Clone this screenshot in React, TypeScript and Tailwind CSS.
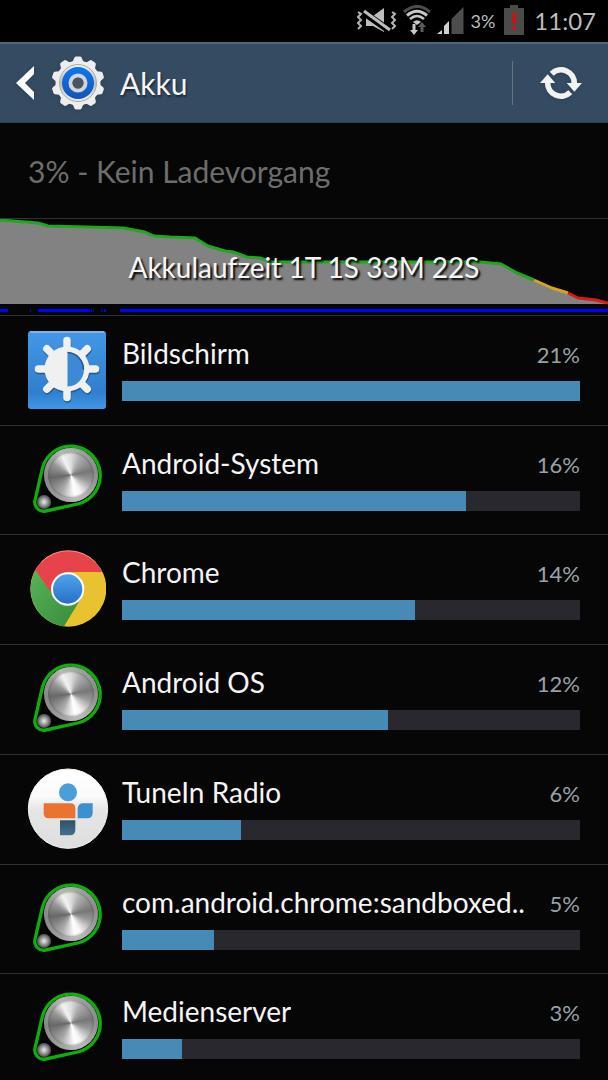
import type { ReactNode } from "react";

const TEETH = [0, 36, 72, 108, 144, 180, 216, 252, 288, 324];
const RAYS = [0, 45, 90, 135, 180, 225, 270, 315];

function MuteIcon() {
  return (
    <svg className="h-8 w-10" viewBox="0 0 40 32" fill="none" aria-hidden="true">
      <path d="M9 11h7L27 3v24l-11-6H9z" fill="#bdbdbd" />
      <path d="M6 7l27 19" stroke="#000" strokeWidth="7" />
      <path d="M7 6l26 19" stroke="#bdbdbd" strokeWidth="3" />
      <path
        d="M1 7l3 2-3 3 3 3-3 3 3 3-3 3M35 7l3 2-3 3 3 3-3 3 3 3-3 3"
        stroke="#b4b4b4"
        strokeWidth="2"
      />
    </svg>
  );
}

function WifiIcon() {
  return (
    <svg className="h-8 w-7" viewBox="0 0 28 32" fill="none" aria-hidden="true">
      <path d="M1 7Q14-4 27 7" stroke="#4d4d4d" strokeWidth="3" />
      <path d="M4 10.500Q14 2 24 10.500" stroke="#c8c8c8" strokeWidth="3" />
      <path d="M7 14Q14 8 21 14" stroke="#c8c8c8" strokeWidth="2.600" />
      <path d="M10 17Q14 13.500 18 17L14 20z" fill="#c8c8c8" />
      <path d="M9.500 19h3v6H15l-4 5-4-5h2.500z" fill="#c8c8c8" />
      <path d="M17.500 27h3v-5H23l-4-5-4 5h2.500z" fill="#5c5c5c" />
    </svg>
  );
}

function SignalIcon() {
  return (
    <svg className="h-8 w-[27px]" viewBox="0 0 27 32" aria-hidden="true">
      <path d="M0 29l5-4v4z" fill="#d0d0d0" />
      <path d="M7 29v-8l5-5v13z" fill="#d0d0d0" />
      <path d="M14.500 29V14L26.500 2v27z" fill="#4d4d4d" />
    </svg>
  );
}

function BatteryIcon() {
  return (
    <svg className="h-8 w-5" viewBox="0 0 20 32" aria-hidden="true">
      <path d="M6 0h8v3h6v27H0V3h6z" fill="#4b4b49" />
      <path d="M8.500 8h3.500v11H8.500zM8.500 21.500h3.500v3H8.500z" fill="#d40f0f" />
    </svg>
  );
}

function SettingsGear() {
  return (
    <svg className="size-14 drop-shadow-sm" viewBox="-28 -28 56 56" aria-hidden="true">
      <defs>
        <linearGradient id="gear" x1="0" y1="0" x2="0" y2="1">
          <stop offset="0" stopColor="#f4f4f4" />
          <stop offset="0.5" stopColor="#bdbdbd" />
          <stop offset="1" stopColor="#f0f0f0" />
        </linearGradient>
        <linearGradient id="gearBlue" x1="0" y1="0" x2="0" y2="1">
          <stop offset="0" stopColor="#0a78f5" />
          <stop offset="1" stopColor="#1454b4" />
        </linearGradient>
      </defs>
      {TEETH.map((a) => (
        <path key={a} d="M-6-20l2.500-5.500q.5-1 1.500-1h4q1 0 1.500 1L6-20z" fill="#ededed" transform={`rotate(${a})`} />
      ))}
      <circle r="22.500" fill="#ededed" />
      <circle r="18.500" fill="url(#gear)" stroke="#a9a9a9" strokeWidth="1" />
      <circle r="16" fill="url(#gearBlue)" />
      <circle r="7.500" fill="none" stroke="#d4d4d4" strokeWidth="4" />
      <circle r="5.500" fill="#4a5560" />
    </svg>
  );
}

function RefreshIcon() {
  return (
    <svg className="h-9 w-11 drop-shadow-sm" viewBox="-66 -54 132 108" fill="none" aria-hidden="true">
      <path d="M-28-28A40 40 0 0 1 40 2" stroke="#f2f2f2" strokeWidth="17" />
      <path d="M17 0H63L40 26z" fill="#f2f2f2" />
      <path d="M28 28A40 40 0 0 1-40-2" stroke="#f2f2f2" strokeWidth="17" />
      <path d="M-17 0H-63L-40-26z" fill="#f2f2f2" />
    </svg>
  );
}

function DisplayIcon() {
  return (
    <svg className="size-[78px]" viewBox="0 0 78 78" aria-hidden="true">
      <defs>
        <linearGradient id="tile" x1="0" y1="0" x2="0" y2="1">
          <stop offset="0" stopColor="#4398e6" />
          <stop offset="0.72" stopColor="#3181d0" />
          <stop offset="0.78" stopColor="#2f7fce" />
          <stop offset="1" stopColor="#4196e6" />
        </linearGradient>
      </defs>
      <rect width="78" height="78" rx="3" fill="url(#tile)" />
      <path d="M2 1h74" stroke="#8cc0ef" strokeWidth="1.500" />
      {["#22598f", "#f0f0f0"].map((color, i) => (
        <g key={color} transform={i === 0 ? "translate(39.500 39.500)" : "translate(39 38)"}>
          {RAYS.map((a) => (
            <path key={a} d="M0-20V-28.500" stroke={color} strokeWidth="7.500" strokeLinecap="round" transform={`rotate(${a})`} />
          ))}
          <circle r="22.500" fill={color} />
        </g>
      ))}
      <path d="M39.500 21.500a16.500 17 0 0 1 0 34z" fill="#3b8ad8" />
      <path d="M39.500 21.500a16.500 17 0 0 1 16 17" fill="none" stroke="#22598f" strokeWidth="1.500" />
    </svg>
  );
}

function SystemIcon() {
  return (
    <div className="relative size-[78px]">
      <svg className="size-full" viewBox="24 32 234 234" aria-hidden="true">
        <path
          d="M67 115A88 88 0 1 1 173 221L77 242A27 27 0 0 1 45 210z"
          fill="#050505"
          stroke="#0fae0d"
          strokeWidth="10"
          strokeLinejoin="round"
        />
      </svg>
      <div className="absolute top-[7px] left-4 size-[54px] rounded-full bg-[conic-gradient(#ddd,#aaa_8%,#777_22%,#999_30%,#f5f5f5_42%,#fff_47%,#aaa_58%,#686868_73%,#999_84%,#f3f3f3_93%,#ddd)] shadow-[inset_0_0_0_4px_rgba(190,190,190,0.45),inset_0_0_2px_5px_rgba(70,70,70,0.4)]" />
      <div className="absolute top-[54px] left-[9px] size-[14px] rounded-full bg-[radial-gradient(#eee,#888_45%,#555_65%,#bbb)]" />
    </div>
  );
}

function ChromeIcon() {
  return (
    <svg className="size-[78px]" viewBox="24 31 234 234" aria-hidden="true">
      <defs>
        <linearGradient id="chromeBlue" x1="0" y1="0" x2="0" y2="1">
          <stop offset="0" stopColor="#4fa3ec" />
          <stop offset="1" stopColor="#2571c4" />
        </linearGradient>
        <linearGradient id="chromeGreen" x1="0" y1="0" x2="1" y2="1">
          <stop offset="0" stopColor="#56b457" />
          <stop offset="1" stopColor="#358a3a" />
        </linearGradient>
      </defs>
      <circle cx="145" cy="147" r="114" fill="#e8c32f" />
      <path d="M46 92A114 114 0 0 0 132 260L186 171 104 171z" fill="url(#chromeGreen)" />
      <path d="M46 92A114 114 0 0 1 247 97H145L102 171z" fill="#e6444a" />
      <path d="M64 67A114 114 0 0 1 226 67" fill="none" stroke="#f58a8c" strokeWidth="3" />
      <circle cx="143" cy="148" r="50" fill="#fff" />
      <circle cx="143" cy="148" r="44" fill="url(#chromeBlue)" />
    </svg>
  );
}

function TuneInIcon() {
  return (
    <svg className="size-[78px] overflow-visible" viewBox="24 29 234 234" aria-hidden="true">
      <defs>
        <linearGradient id="tunein" x1="0" y1="0" x2="0" y2="1">
          <stop offset="0" stopColor="#fff" />
          <stop offset="0.35" stopColor="#fafafa" />
          <stop offset="0.5" stopColor="#e6e6e6" />
          <stop offset="1" stopColor="#dedede" />
        </linearGradient>
        <linearGradient id="tuneinTeal" x1="0" y1="0" x2="0" y2="1">
          <stop offset="0" stopColor="#2f5268" />
          <stop offset="1" stopColor="#46708c" />
        </linearGradient>
      </defs>
      <circle cx="144" cy="145" r="119" fill="url(#tunein)" stroke="#f5f5f5" strokeWidth="3" />
      <circle cx="144" cy="96" r="27" fill="#4a9fdb" />
      <path d="M71 129h80q15 0 15 15v30H86q-15 0-15-15z" fill="#e87430" />
      <path d="M218 129h-28q-17 0-17 17v28h28q17 0 17-17z" fill="#3d8fcd" />
      <path d="M120 180h46v28q0 17-17 17h-29z" fill="url(#tuneinTeal)" />
    </svg>
  );
}

type Usage = {
  name: string;
  percent: number;
  bar: number;
  icon: ReactNode;
};

const usages: Usage[] = [
  { name: "Bildschirm", percent: 21, bar: 100, icon: <DisplayIcon /> },
  { name: "Android-System", percent: 16, bar: 75, icon: <SystemIcon /> },
  { name: "Chrome", percent: 14, bar: 64, icon: <ChromeIcon /> },
  { name: "Android OS", percent: 12, bar: 58, icon: <SystemIcon /> },
  { name: "TuneIn Radio", percent: 6, bar: 26, icon: <TuneInIcon /> },
  { name: "com.android.chrome:sandboxed..", percent: 5, bar: 20, icon: <SystemIcon /> },
  { name: "Medienserver", percent: 3, bar: 13, icon: <SystemIcon /> },
];

function UsageRow({ name, percent, bar, icon }: Usage) {
  return (
    <li className="border-b border-[#303030]">
      <button type="button" className="flex w-full gap-4 px-7 pt-[15px] text-left">
        <span className="shrink-0">{icon}</span>
        <span className="min-w-0 flex-1 pt-1">
          <span className="flex h-9 items-center justify-between gap-3">
            <span className="overflow-hidden text-[28px] leading-9 whitespace-nowrap">{name}</span>
            <span className="pt-1 text-[22px] leading-8 text-[#98a2a6]">{percent}%</span>
          </span>
          <span className="mt-[10px] block h-5 bg-[#29282e]">
            <span className="block h-full bg-[#478ab6]" style={{ width: `${bar}%` }} />
          </span>
        </span>
      </button>
    </li>
  );
}

function HistoryChart() {
  return (
    <section className="relative border-y border-[#303030]">
      <svg className="block h-24 w-full" viewBox="0 0 608 96" preserveAspectRatio="none" aria-hidden="true">
        <path
          d="M0 1L38 4 48 7 123 9 145 13 154 17 170 18 195 19 208 27 225 32 233 33 247 38 260 39 272 43H480L501 45 517 54 534 61 552 69 568 74 578 79 596 81 608 84V85H0z"
          fill="#828282"
        />
        <g fill="none" strokeWidth="3" strokeLinejoin="round">
          <path
            d="M0 1L38 4 48 7 123 9 145 13 154 17 170 18 195 19 208 27 225 32 233 33 247 38 260 39 272 43H480L501 45 517 54 534 61"
            stroke="#1fa81f"
          />
          <path d="M534 61L552 69 568 74" stroke="#d3a51c" />
          <path d="M568 74L578 79 596 81 608 84" stroke="#dc1a14" />
        </g>
        <path
          d="M0 90h8v3H0zM30 90h1v3h-1zM38 90h52v3H38zM91 90h1v3h-1zM93 90h1v3h-1zM101 90h1v3h-1zM104 90h2v3h-2zM120 90h488v3H120z"
          fill="#00f"
        />
      </svg>
      <p className="absolute inset-x-0 top-7 text-center text-[28px] leading-10 [text-shadow:2px_2px_2px_#000]">
        Akkulaufzeit 1T 1S 33M 22S
      </p>
    </section>
  );
}

export default function App() {
  return (
    <div className="flex h-screen flex-col overflow-hidden bg-[#060606] font-['Lato','Open_Sans',sans-serif] text-[#f5f5f5]">
      <div className="flex h-[42px] shrink-0 items-center justify-end gap-[6px] bg-black pr-3 text-[#bdbdbd]">
        <MuteIcon />
        <WifiIcon />
        <SignalIcon />
        <span className="text-lg leading-6">3%</span>
        <span className="pr-1 pl-[3px]">
          <BatteryIcon />
        </span>
        <span className="text-2xl leading-8">11:07</span>
      </div>

      <header className="flex h-[81px] shrink-0 items-center justify-between border-t-2 border-b border-t-[#456a80] border-b-[#294559] bg-[#344b62] pr-[25px] pl-4">
        <button type="button" className="flex items-center gap-[14px]">
          <svg className="h-9 w-5 drop-shadow-sm" viewBox="0 0 20 36" aria-hidden="true">
            <path d="M0 18L18 1v8L9 18l9 9v8z" fill="#fff" />
          </svg>
          <SettingsGear />
          <span className="text-[30px] leading-10 [text-shadow:1px_2px_2px_#1b2733]">Akku</span>
        </button>
        <div className="flex items-center gap-[26px]">
          <span className="h-11 w-px bg-[#64757e]" />
          <button type="button" aria-label="Aktualisieren">
            <RefreshIcon />
          </button>
        </div>
      </header>

      <main>
        <p className="px-7 pt-7 pb-[27px] text-[30px] leading-10 text-[#6d6d6d]">3% - Kein Ladevorgang</p>
        <HistoryChart />
        <ul className="grid min-h-[768px] auto-rows-fr">
          {usages.map((usage) => (
            <UsageRow key={usage.name} {...usage} />
          ))}
        </ul>
      </main>
    </div>
  );
}
